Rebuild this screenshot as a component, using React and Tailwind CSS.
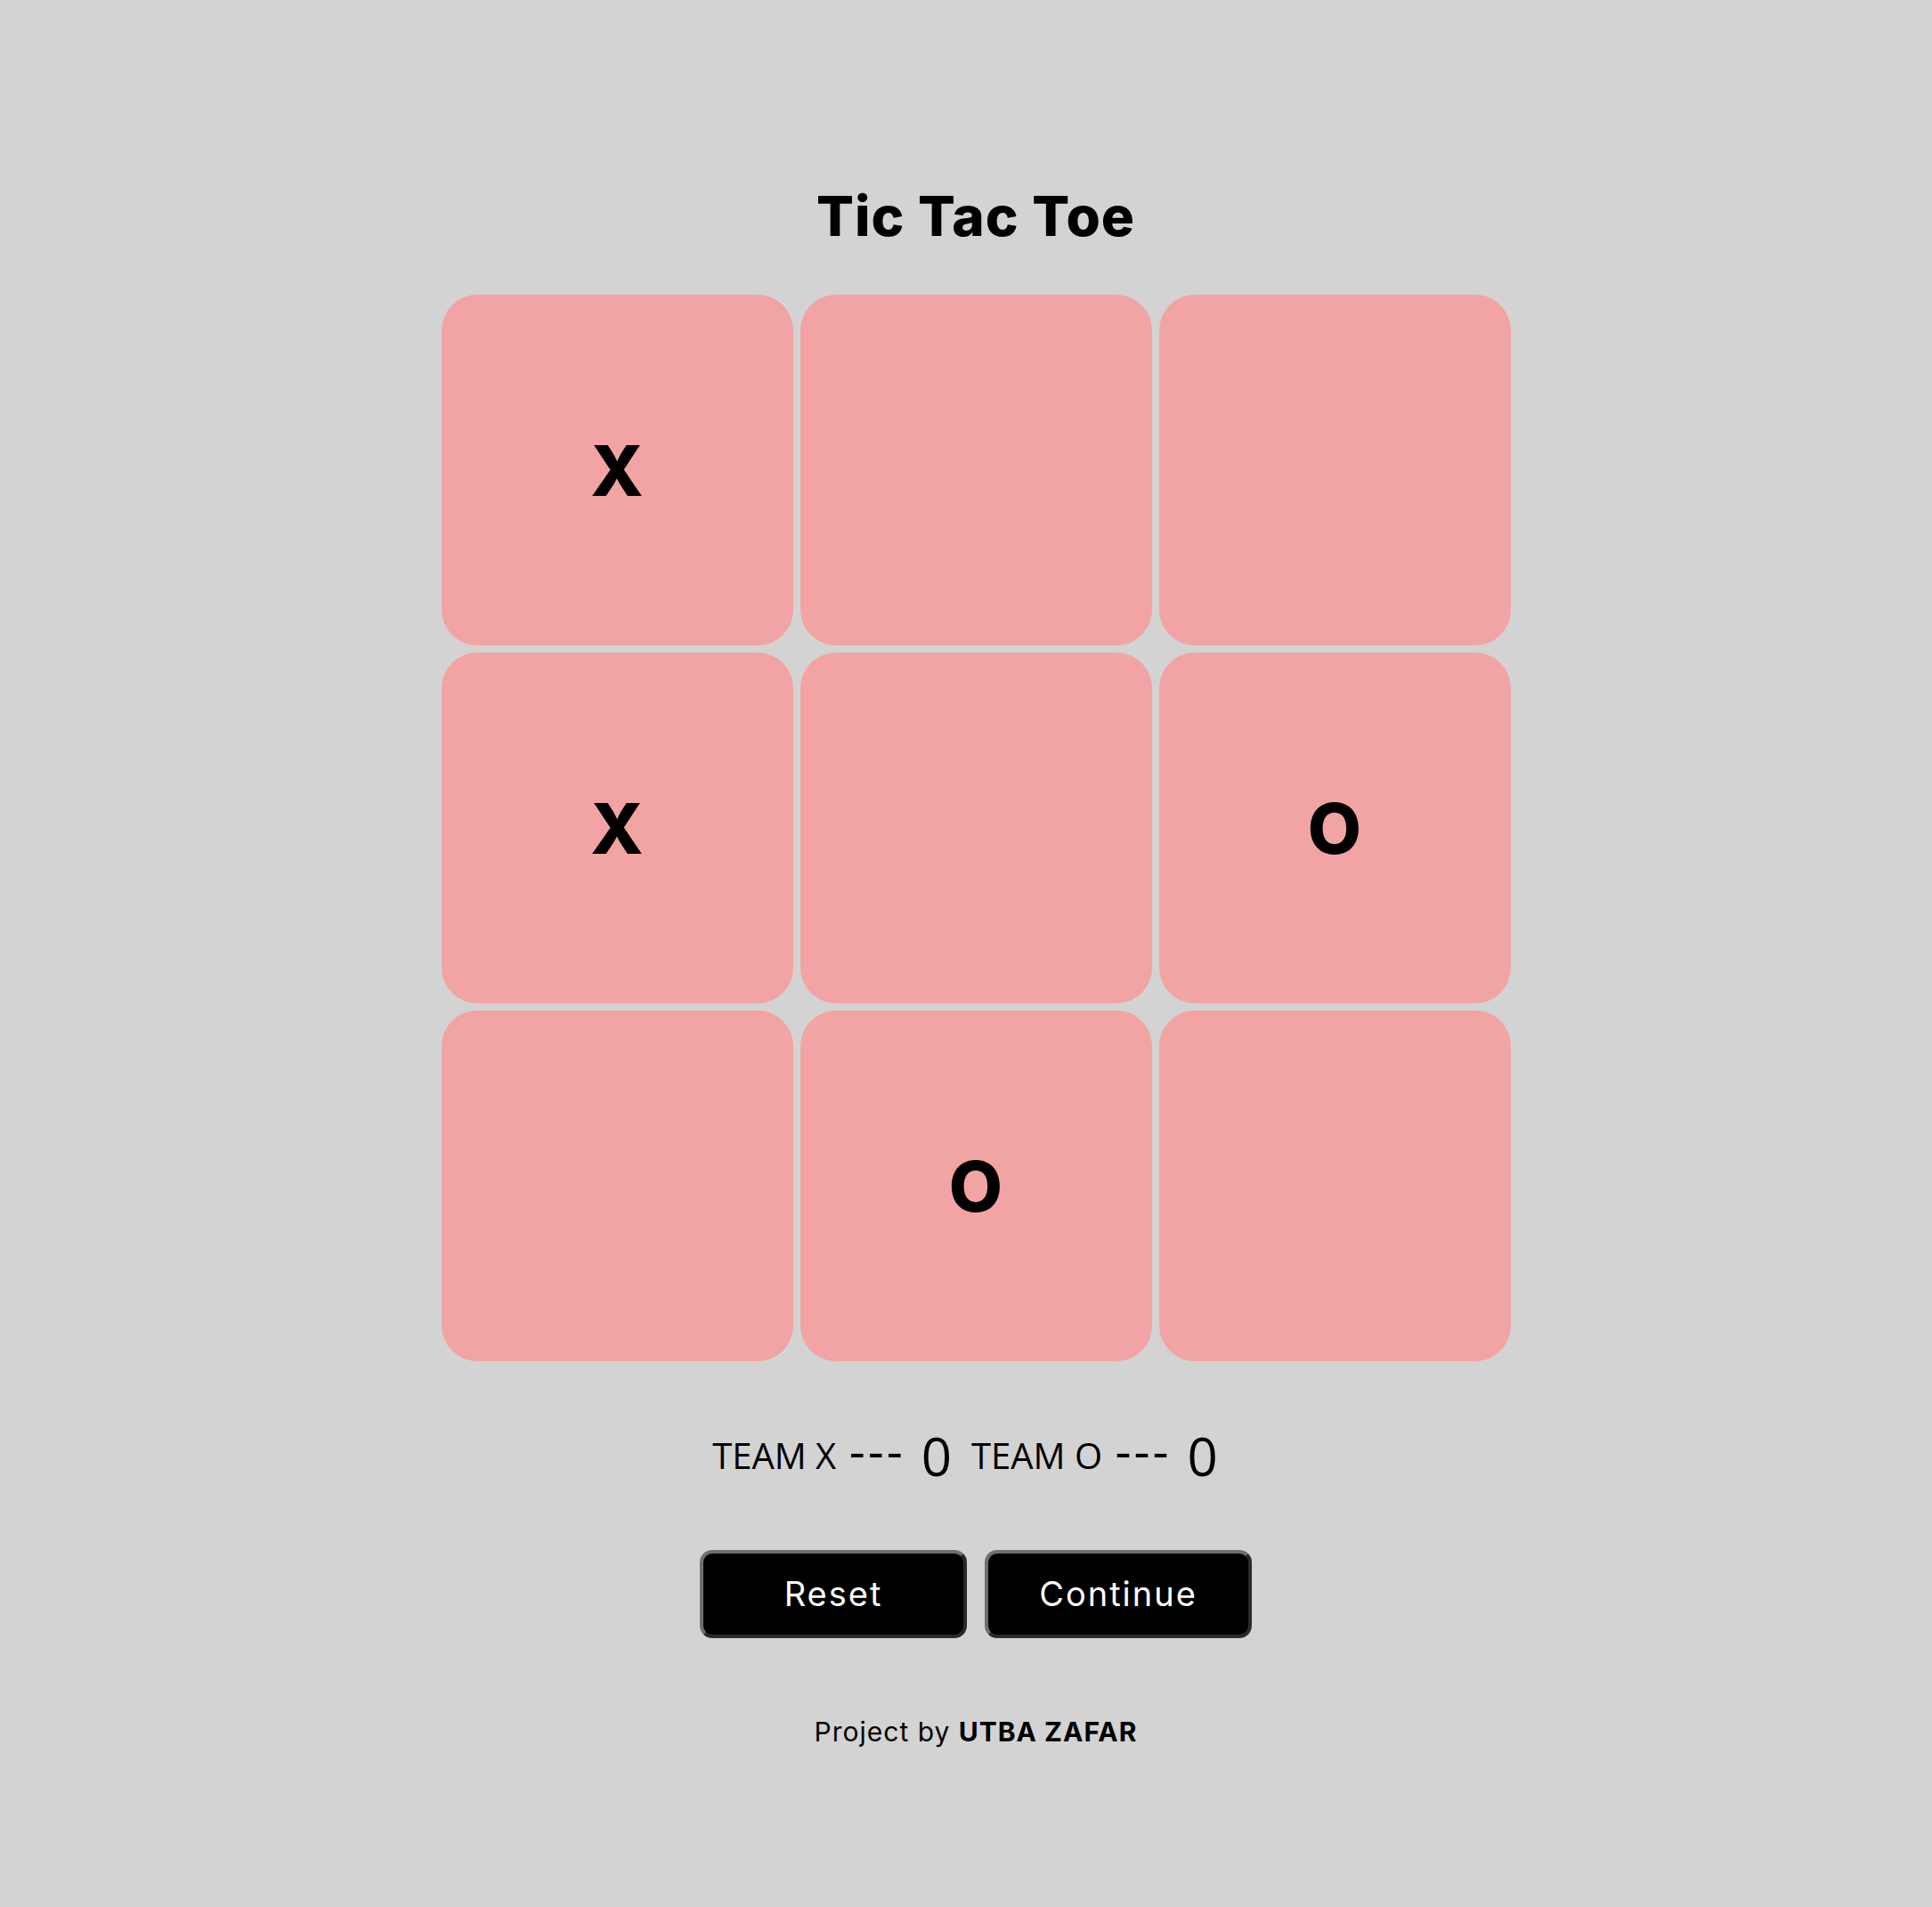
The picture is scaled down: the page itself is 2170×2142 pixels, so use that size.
import React from "react";

const board = ["X", "", "", "X", "", "O", "", "O", ""];

export default function App() {
  return (
    <div className="min-h-screen w-full bg-[#d3d3d3] flex flex-col items-center pl-[22px] pt-[212px] pb-[100px]">
      <h1 className="text-[62px] leading-[62px] font-extrabold text-black tracking-[1px] [font-family:Inter,sans-serif]">
        Tic Tac Toe
      </h1>

      <div className="mt-[57px] grid grid-cols-3 gap-2">
        {board.map((v, i) => (
          <button
            key={i}
            className="w-[395px] h-[394px] rounded-[40px] bg-[#f1a4a3] flex items-center justify-center text-[78px] font-extrabold text-black [font-family:Inter,sans-serif]"
          >
            {v}
          </button>
        ))}
      </div>

      <div className="mt-[70px] mr-[24px] flex items-center text-black [font-family:'Open_Sans',sans-serif]">
        <span className="text-[40px] leading-[56px]">
          TEAM X <span className="pl-[4px] text-[56px] leading-[40px] tracking-[3px]">---</span>
        </span>
        <span className="ml-[18px] text-[60px] leading-[72px]">0</span>
        <span className="ml-[22px] text-[40px] leading-[56px]">
          TEAM O <span className="pl-[4px] text-[56px] leading-[40px] tracking-[3px]">---</span>
        </span>
        <span className="ml-[18px] text-[60px] leading-[72px]">0</span>
      </div>

      <div className="mt-[70px] flex gap-[20px]">
        <button className="w-[300px] h-[99px] rounded-[14px] bg-black text-white border-[4px] border-t-[#6e6e6e] border-l-[#6e6e6e] border-b-[#2a2a2a] border-r-[#2a2a2a] text-[38px] tracking-[2px] [font-family:Inter,sans-serif]">
          Reset
        </button>
        <button className="w-[300px] h-[99px] rounded-[14px] bg-black text-white border-[4px] border-t-[#6e6e6e] border-l-[#6e6e6e] border-b-[#2a2a2a] border-r-[#2a2a2a] text-[38px] tracking-[2px] [font-family:Inter,sans-serif]">
          Continue
        </button>
      </div>

      <p className="mt-[85px] text-[30px] leading-[40px] tracking-[1px] text-black [font-family:Inter,sans-serif]">
        Project by <span className="font-bold">UTBA ZAFAR</span>
      </p>
    </div>
  );
}
